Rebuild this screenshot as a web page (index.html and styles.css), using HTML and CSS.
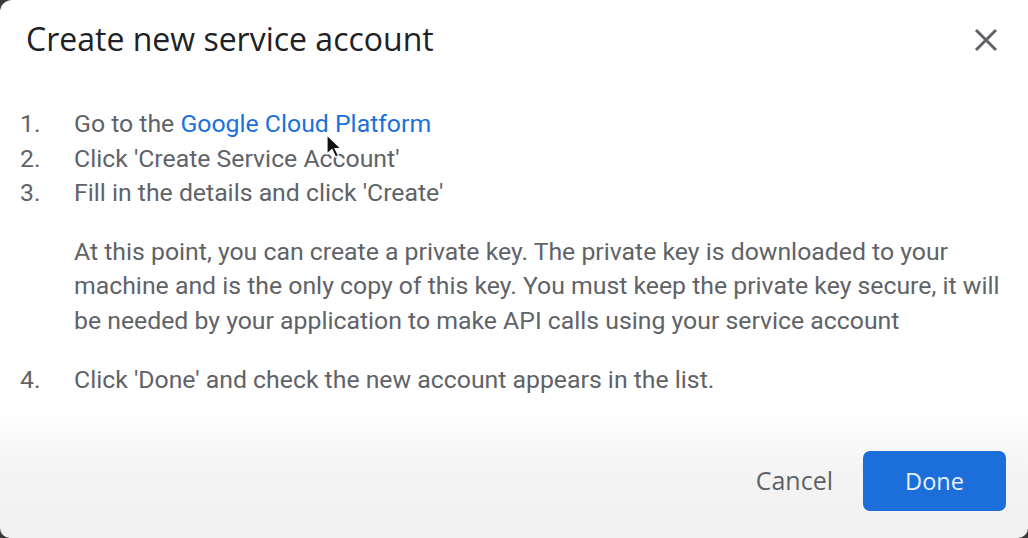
FILE: index.html
```html
<!DOCTYPE html>
<html>
<head>
    <meta charset="UTF-8">
    <title>Create new service account</title>
    <link rel="stylesheet" href="styles.css">
</head>
<body>
<div class="dialog">
    <div class="dialogHead">
        <h1 class="dialogTitle">Create new service account</h1>
        <span class="closeBtn">
            <svg width="26" height="26" viewBox="0 0 26 26">
                <path d="M3 3 L23 23 M23 3 L3 23" stroke="#5f6368" stroke-width="3" fill="none"/>
            </svg>
        </span>
    </div>
    <div class="dialogBody">
        <ul class="steps">
            <li><span class="num">1.</span><span class="txt">Go to the <a href="#" class="link">Google Cloud Platform</a></span></li>
            <li><span class="num">2.</span><span class="txt">Click 'Create Service Account'</span></li>
            <li><span class="num">3.</span><span class="txt">Fill in the details and click 'Create'</span></li>
        </ul>
        <p class="note">At this point, you can create a private key. The private key is downloaded to your machine and is the only copy of this key. You must keep the private key secure, it will be needed by your application to make API calls using your service account</p>
        <ul class="steps">
            <li><span class="num">4.</span><span class="txt">Click 'Done' and check the new account appears in the list.</span></li>
        </ul>
    </div>
    <div class="dialogFoot">
        <span class="btnCancel">Cancel</span>
        <span class="btnDone">Done</span>
    </div>
    <!-- mouse pointer -->
    <svg class="pointer" width="18" height="26" viewBox="0 0 18 26">
        <path d="M1 1 L1 20 L6 15.5 L9.5 23 L12.5 21.6 L9 14.5 L15 14.5 Z" fill="#111" stroke="#fff" stroke-width="1.2"/>
    </svg>
</div>
</body>
</html>
```

FILE: styles.css
```css
* {
    list-style: none;
    padding: 0;
    margin: 0;
}

html, body {
    width: 1028px;
    height: 538px;
    background: #3a3a3a;
    overflow: hidden;
}

.dialog {
    position: relative;
    width: 1028px;
    height: 538px;
    border-radius: 12px 0 10px 10px;
    background: linear-gradient(to bottom, #fff 0, #fff 410px, #f4f4f4 470px, #f1f1f1 538px);
    display: flex;
    flex-direction: column;
    font-family: Roboto, "Liberation Sans", sans-serif;
}

.dialogHead {
    height: 78px;
    display: flex;
    align-items: center;
    justify-content: space-between;
    padding: 0 29px 0 26px;
}

.dialogTitle {
    font-family: "Open Sans", Roboto, sans-serif;
    font-weight: 500;
    font-size: 32px;
    line-height: 40px;
    color: #202124;
}

.closeBtn {
    display: flex;
    margin-top: 2px;
    cursor: pointer;
}

.dialogBody {
    padding: 29px 20px 0 20px;
    font-size: 24.8px;
    color: #5f6368;
    line-height: 34.5px;
}

.steps li {
    display: flex;
}

.num {
    width: 54px;
    flex-shrink: 0;
}

.link {
    color: #1a71de;
    text-decoration: none;
}

.note {
    margin: 24px 0 25px 54px;
}

.dialogFoot {
    margin-top: auto;
    height: 60px;
    margin-bottom: 27px;
    padding-right: 22px;
    display: flex;
    justify-content: flex-end;
    align-items: center;
    gap: 30px;
    font-family: "Open Sans", Roboto, sans-serif;
    font-weight: 500;
}

.btnCancel {
    font-size: 25px;
    color: #5f6368;
    margin-top: -3px;
    cursor: pointer;
}

.btnDone {
    width: 143px;
    height: 60px;
    border-radius: 7px;
    background: #1c6fdb;
    color: #e8f0fe;
    font-size: 23.5px;
    display: flex;
    align-items: center;
    justify-content: center;
    cursor: pointer;
}

.pointer {
    position: absolute;
    left: 326px;
    top: 134px;
}
```
